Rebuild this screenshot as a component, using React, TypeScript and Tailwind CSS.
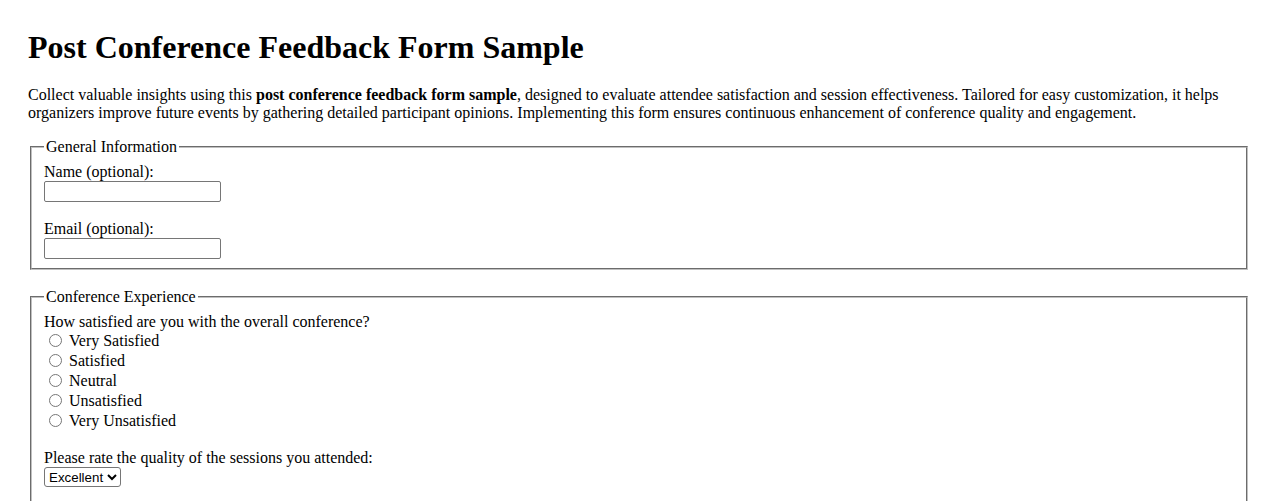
import React from "react";

const options = ["Very Satisfied", "Satisfied", "Neutral", "Unsatisfied", "Very Unsatisfied"];

const App = () => {
	return (
		<div className="bg-white text-black font-['Liberation_Serif',serif] text-[16px] leading-[normal] px-[28px] pb-8">
			<h1 className="text-[32px] font-bold pt-[29px] mb-[20px]">
				Post Conference Feedback Form Sample
			</h1>
			<p className="mb-4">
				Collect valuable insights using this <strong>post conference feedback form sample</strong>, designed to evaluate attendee satisfaction and session effectiveness. Tailored for easy customization, it helps organizers improve future events by gathering detailed participant opinions. Implementing this form ensures continuous enhancement of conference quality and engagement.
			</p>

			<form>
				{/* General Information */}
				<fieldset className="mx-[2px] border-2 [border-style:groove] border-[#c0c0c0] px-3 pt-[7px] pb-[9px]">
					<legend className="px-[2px]">General Information</legend>
					<label htmlFor="name">Name (optional):</label>
					<br />
					<input
						id="name"
						type="text"
						className="w-[177px] h-[21px] border border-[#767676] rounded-[2px] px-[2px] align-bottom"
					/>
					<br />
					<br />
					<label htmlFor="email">Email (optional):</label>
					<br />
					<input
						id="email"
						type="email"
						className="w-[177px] h-[21px] border border-[#767676] rounded-[2px] px-[2px] align-bottom"
					/>
				</fieldset>

				{/* Conference Experience */}
				<fieldset className="mx-[2px] mt-[18px] border-2 [border-style:groove] border-[#c0c0c0] px-3 pt-[7px] pb-[9px]">
					<legend className="px-[2px]">Conference Experience</legend>
					<div className="h-[18px]">How satisfied are you with the overall conference?</div>
					{options.map((o) => (
						<label key={o} className="flex items-center h-[20px]">
							<input type="radio" name="overall" className="w-[13px] h-[13px] ml-[5px] mr-[7px] mt-[-2px]" />
							<span>{o}</span>
						</label>
					))}
					<div className="h-[18px]" />
					<label htmlFor="quality">Please rate the quality of the sessions you attended:</label>
					<br />
					<select
						id="quality"
						className="h-[20px] w-[77px] border border-[#767676] rounded-[3px] font-['Liberation_Sans',sans-serif] text-[13.33px] align-top"
					>
						<option>Excellent</option>
						<option>Good</option>
						<option>Average</option>
						<option>Poor</option>
					</select>
					<div className="h-[40px]" />
				</fieldset>
			</form>
		</div>
	);
};

export default App;
